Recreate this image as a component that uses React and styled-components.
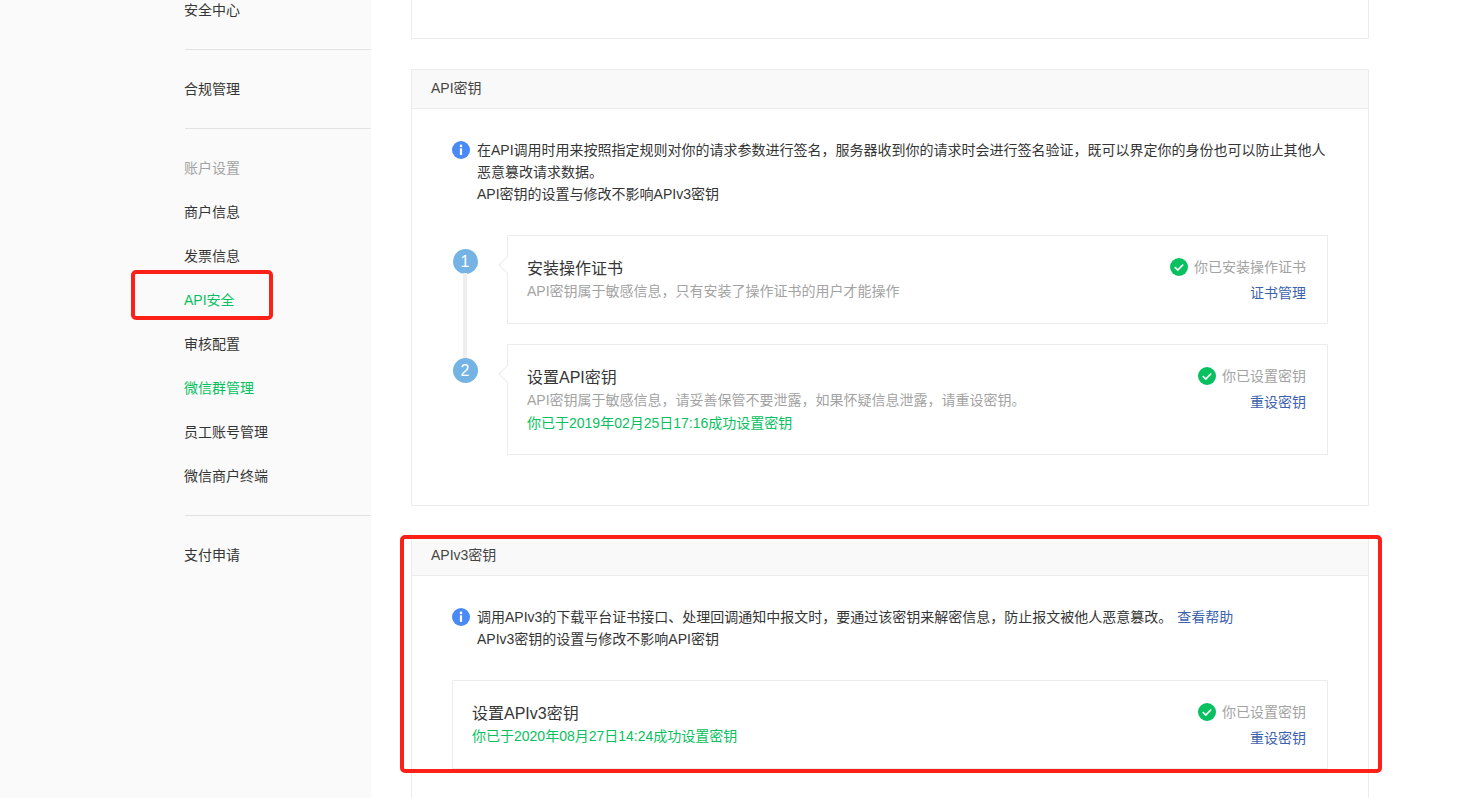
import React from "react";
import styled, { createGlobalStyle } from "styled-components";

const GlobalStyle = createGlobalStyle`
    html, body {
        margin: 0;
        padding: 0;
        height: 100%;
        overflow: hidden;
        background: #fff;
    }
    * {
        box-sizing: border-box;
    }
`;

const Page = styled.div`
    position: relative;
    width: 1472px;
    height: 798px;
    display: flex;
    overflow: hidden;
    font-family: "Liberation Sans", "Noto Sans CJK SC", sans-serif;
    font-size: 14px;
    color: #353535;
`;

const Sidebar = styled.aside`
    width: 371px;
    flex: none;
    background: #fafafa;
    padding-left: 185px;
`;

const NavGroup = styled.div`
    border-bottom: ${(p) => (p.$last ? "none" : "1px solid #e3e3e3")};
    margin-top: ${(p) => (p.$first ? "-12px" : "0")};
    padding: ${(p) => (p.$first ? "0 0 17px 0" : "17px 0")};
`;

const NavItem = styled.div`
    height: 44px;
    line-height: 44px;
    margin-left: -1px;
    color: ${(p) => p.$color || "#353535"};
`;

const Main = styled.main`
    flex: 1;
    min-width: 0;
    padding: 0 103px 0 40px;
    margin-top: -11px;
`;

const Card = styled.section`
    border: 1px solid #ececec;
    margin-bottom: 30px;
    height: ${(p) => p.$height};
`;

const CardHeader = styled.div`
    height: 39px;
    line-height: 37px;
    padding-left: 19px;
    background: #f9f9f9;
    border-bottom: 1px solid #ececec;
    color: #454545;
`;

const CardBody = styled.div`
    padding: 30px 40px 0 40px;
`;

const Notice = styled.div`
    display: flex;
    gap: 7px;
    line-height: 22px;
    margin-bottom: ${(p) => p.$gap};
`;

const InfoIcon = styled.svg`
    width: 18px;
    height: 18px;
    flex: none;
    margin-top: 2px;
`;

const NoticeText = styled.div`
    flex: 1;
    min-width: 0;
    color: #353535;
`;

const HelpLink = styled.a`
    color: #3c62ad;
    margin-left: 5px;
`;

const Steps = styled.div`
    display: flex;
    flex-direction: column;
    gap: 20px;
`;

const Step = styled.div`
    display: flex;
    gap: 29px;
`;

const Marker = styled.div`
    position: relative;
    width: 26px;
    flex: none;
    padding-top: 14px;
    display: flex;
    justify-content: center;
`;

const Bubble = styled.div`
    width: 25px;
    height: 25px;
    border-radius: 50%;
    background: #74b3e4;
    color: #fff;
    font-size: 16px;
    line-height: 25px;
    text-align: center;
`;

const Connector = styled.div`
    position: absolute;
    left: 11px;
    top: 38px;
    width: 4px;
    height: 85px;
    background: #eeeeee;
`;

const StepBox = styled.div`
    position: relative;
    flex: 1;
    height: ${(p) => p.$height};
    border: 1px solid #ececec;
    padding: 20px 21px 20px 19px;
    display: flex;
    justify-content: space-between;
    background: #fff;
`;

const Arrow = styled.span`
    position: absolute;
    left: -7px;
    top: 23px;
    width: 12px;
    height: 12px;
    background: #fff;
    border-left: 1px solid #ececec;
    border-bottom: 1px solid #ececec;
    transform: rotate(45deg);
`;

const StepInfo = styled.div`
    display: flex;
    flex-direction: column;
    padding-top: 2px;
`;

const StepTitle = styled.div`
    font-size: 16px;
    line-height: 22px;
    color: #353535;
`;

const StepDesc = styled.div`
    line-height: 23px;
    color: ${(p) => (p.$success ? "#07c160" : "#a3a3a3")};
`;

const StepStatus = styled.div`
    display: flex;
    flex-direction: column;
    align-items: flex-end;
    gap: 4px;
`;

const StatusRow = styled.div`
    display: flex;
    align-items: center;
    gap: 6px;
    line-height: 22px;
    color: #a3a3a3;
`;

const CheckIcon = styled.svg`
    width: 18px;
    height: 18px;
    flex: none;
`;

const ActionLink = styled.a`
    line-height: 22px;
    color: #3c62ad;
`;

const Highlight = styled.div`
    position: absolute;
    left: ${(p) => p.$left}px;
    top: ${(p) => p.$top}px;
    width: ${(p) => p.$width}px;
    height: ${(p) => p.$height}px;
    border: 4px solid #fb2118;
    border-radius: 5px;
    pointer-events: none;
`;

const Info = () => (
    <InfoIcon viewBox="0 0 18 18">
        <circle cx="9" cy="9" r="9" fill="#4a8af4" />
        <circle cx="9" cy="4.9" r="1.3" fill="#fff" />
        <rect x="7.9" y="7.3" width="2.2" height="6.6" fill="#fff" />
    </InfoIcon>
);

const Check = () => (
    <CheckIcon viewBox="0 0 18 18">
        <circle cx="9" cy="9" r="9" fill="#07c160" />
        <path d="M4.8 9.2l3 2.9 5.4-5.6" fill="none" stroke="#fff" strokeWidth="1.7" />
    </CheckIcon>
);

const StepCard = ({ title, descs, status, action, height, arrow }) => (
    <StepBox $height={height}>
        {arrow && <Arrow />}
        <StepInfo>
            <StepTitle>{title}</StepTitle>
            {descs.map((d) => (
                <StepDesc key={d.text} $success={d.success}>
                    {d.text}
                </StepDesc>
            ))}
        </StepInfo>
        <StepStatus>
            <StatusRow>
                <Check />
                {status}
            </StatusRow>
            <ActionLink>{action}</ActionLink>
        </StepStatus>
    </StepBox>
);

export default function App() {
    return (
        <Page>
            <GlobalStyle />
            <Sidebar>
                <NavGroup $first>
                    <NavItem>安全中心</NavItem>
                </NavGroup>
                <NavGroup>
                    <NavItem>合规管理</NavItem>
                </NavGroup>
                <NavGroup>
                    <NavItem $color="#a3a3a3">账户设置</NavItem>
                    <NavItem>商户信息</NavItem>
                    <NavItem>发票信息</NavItem>
                    <NavItem $color="#07c160">API安全</NavItem>
                    <NavItem>审核配置</NavItem>
                    <NavItem $color="#07c160">微信群管理</NavItem>
                    <NavItem>员工账号管理</NavItem>
                    <NavItem>微信商户终端</NavItem>
                </NavGroup>
                <NavGroup $last>
                    <NavItem>支付申请</NavItem>
                </NavGroup>
            </Sidebar>
            <Main>
                <Card $height="50px" />
                <Card $height="437px">
                    <CardHeader>API密钥</CardHeader>
                    <CardBody>
                        <Notice $gap="30px">
                            <Info />
                            <NoticeText>
                                在API调用时用来按照指定规则对你的请求参数进行签名，服务器收到你的请求时会进行签名验证，既可以界定你的身份也可以防止其他人恶意篡改请求数据。
                                <br />
                                API密钥的设置与修改不影响APIv3密钥
                            </NoticeText>
                        </Notice>
                        <Steps>
                            <Step>
                                <Marker>
                                    <Bubble>1</Bubble>
                                    <Connector />
                                </Marker>
                                <StepCard
                                    arrow
                                    height="89px"
                                    title="安装操作证书"
                                    descs={[{ text: "API密钥属于敏感信息，只有安装了操作证书的用户才能操作" }]}
                                    status="你已安装操作证书"
                                    action="证书管理"
                                />
                            </Step>
                            <Step>
                                <Marker>
                                    <Bubble>2</Bubble>
                                </Marker>
                                <StepCard
                                    arrow
                                    height="111px"
                                    title="设置API密钥"
                                    descs={[
                                        { text: "API密钥属于敏感信息，请妥善保管不要泄露，如果怀疑信息泄露，请重设密钥。" },
                                        { text: "你已于2019年02月25日17:16成功设置密钥", success: true },
                                    ]}
                                    status="你已设置密钥"
                                    action="重设密钥"
                                />
                            </Step>
                        </Steps>
                    </CardBody>
                </Card>
                <Card $height="300px">
                    <CardHeader>APIv3密钥</CardHeader>
                    <CardBody>
                        <Notice $gap="30px">
                            <Info />
                            <NoticeText>
                                调用APIv3的下载平台证书接口、处理回调通知中报文时，要通过该密钥来解密信息，防止报文被他人恶意篡改。
                                <HelpLink>查看帮助</HelpLink>
                                <br />
                                APIv3密钥的设置与修改不影响API密钥
                            </NoticeText>
                        </Notice>
                        <StepCard
                            height="89px"
                            title="设置APIv3密钥"
                            descs={[{ text: "你已于2020年08月27日14:24成功设置密钥", success: true }]}
                            status="你已设置密钥"
                            action="重设密钥"
                        />
                    </CardBody>
                </Card>
            </Main>
            <Highlight $left={131} $top={270} $width={142} $height={50} />
            <Highlight $left={400} $top={535} $width={982} $height={238} />
        </Page>
    );
}
